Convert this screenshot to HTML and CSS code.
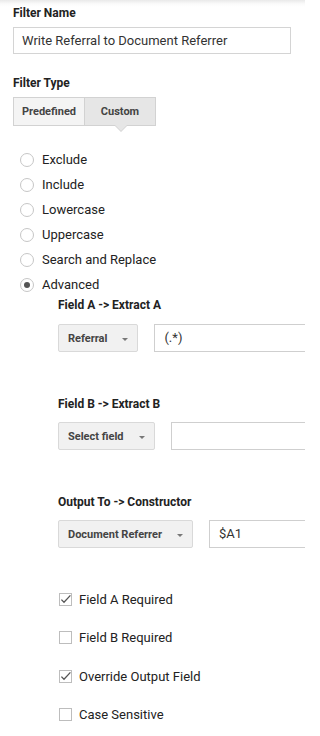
FILE: index.html
```html
<!DOCTYPE html>
<html lang="en">
<head>
<meta charset="utf-8">
<title>Filter</title>
<link rel="stylesheet" href="styles.css">
</head>
<body>
<div class="page">
  <div class="label">Filter Name</div>
  <div class="name-input">Write Referral to Document Referrer</div>

  <div class="label type-label">Filter Type</div>
  <div class="toggle">
    <div class="seg seg-first">Predefined</div>
    <div class="seg seg-active">Custom</div>
  </div>

  <div class="radios">
    <div class="radio-row"><span class="radio"></span><span>Exclude</span></div>
    <div class="radio-row"><span class="radio"></span><span>Include</span></div>
    <div class="radio-row"><span class="radio"></span><span>Lowercase</span></div>
    <div class="radio-row"><span class="radio"></span><span>Uppercase</span></div>
    <div class="radio-row"><span class="radio"></span><span>Search and Replace</span></div>
    <div class="radio-row"><span class="radio radio-on"></span><span>Advanced</span></div>
  </div>

  <div class="advanced">
    <div class="label">Field A -&gt; Extract A</div>
    <div class="adv-row">
      <div class="select"><span>Referral</span><span class="caret"></span></div>
      <div class="adv-input">(.*)</div>
    </div>

    <div class="label sub-label">Field B -&gt; Extract B</div>
    <div class="adv-row">
      <div class="select"><span>Select field</span><span class="caret"></span></div>
      <div class="adv-input"></div>
    </div>

    <div class="label sub-label">Output To -&gt; Constructor</div>
    <div class="adv-row">
      <div class="select"><span>Document Referrer</span><span class="caret"></span></div>
      <div class="adv-input">$A1</div>
    </div>

    <div class="checks">
      <div class="check-row">
        <svg class="checkbox" width="13" height="13" viewBox="0 0 13 13"><rect x="0.5" y="0.5" width="12" height="12" fill="#fff" stroke="#bdbdbd"/><path d="M2.4 6.6 L5 9.3 L11.4 2.4" fill="none" stroke="#555" stroke-width="1.3"/></svg>
        <span>Field A Required</span>
      </div>
      <div class="check-row">
        <svg class="checkbox" width="13" height="13" viewBox="0 0 13 13"><rect x="0.5" y="0.5" width="12" height="12" fill="#fff" stroke="#bdbdbd"/></svg>
        <span>Field B Required</span>
      </div>
      <div class="check-row">
        <svg class="checkbox" width="13" height="13" viewBox="0 0 13 13"><rect x="0.5" y="0.5" width="12" height="12" fill="#fff" stroke="#bdbdbd"/><path d="M2.4 6.6 L5 9.3 L11.4 2.4" fill="none" stroke="#555" stroke-width="1.3"/></svg>
        <span>Override Output Field</span>
      </div>
      <div class="check-row">
        <svg class="checkbox" width="13" height="13" viewBox="0 0 13 13"><rect x="0.5" y="0.5" width="12" height="12" fill="#fff" stroke="#bdbdbd"/></svg>
        <span>Case Sensitive</span>
      </div>
    </div>
  </div>
</div>
</body>
</html>
```

FILE: styles.css
```css
html, body {
  margin: 0;
  padding: 0;
  background: #fff;
}

.page {
  width: 305px;
  height: 736px;
  box-sizing: border-box;
  overflow: hidden;
  padding: 5px 0 0 13px;
  font-family: Roboto, "Liberation Sans", Arial, sans-serif;
  color: #222;
  background: linear-gradient(to bottom, #e9e9e9 0, #fbfbfb 4px, #fff 7px) no-repeat;
}

.label {
  font-weight: 700;
  font-size: 12px;
  line-height: 16px;
  color: #222;
}

.name-input {
  margin-top: 6px;
  width: 278px;
  height: 27px;
  box-sizing: border-box;
  border: 1px solid #d4d4d4;
  padding: 0 8px;
  font-size: 13px;
  line-height: 25px;
  color: #333;
  white-space: nowrap;
}

.type-label {
  margin-top: 21px;
}

.toggle {
  margin-top: 6px;
  display: flex;
  height: 29px;
}

.seg {
  box-sizing: border-box;
  height: 29px;
  border: 1px solid #d2d2d2;
  font-weight: 700;
  font-size: 11px;
  line-height: 27px;
  text-align: center;
  color: #444;
}

.seg-first {
  width: 72px;
  background: #f4f4f4;
}

.seg-active {
  width: 71px;
  border-left: 0;
  background: #e6e6e6;
  position: relative;
}

.seg-active::before {
  content: "";
  position: absolute;
  left: 29px;
  top: 27px;
  border-left: 7px solid transparent;
  border-right: 7px solid transparent;
  border-top: 7px solid #d2d2d2;
}

.seg-active::after {
  content: "";
  position: absolute;
  left: 30px;
  top: 27px;
  border-left: 6px solid transparent;
  border-right: 6px solid transparent;
  border-top: 6px solid #e6e6e6;
}

.radios {
  margin-top: 21px;
  padding-left: 7px;
}

.radio-row {
  height: 25px;
  display: flex;
  align-items: center;
  gap: 8px;
  font-size: 13px;
  color: #222;
}

.radio {
  width: 14px;
  height: 14px;
  box-sizing: border-box;
  border: 1px solid #c6c6c6;
  border-radius: 50%;
  background: #fff;
  display: flex;
  align-items: center;
  justify-content: center;
  flex: none;
}

.radio-on::after {
  content: "";
  width: 6px;
  height: 6px;
  border-radius: 50%;
  background: #555;
}

.advanced {
  padding-left: 45px;
}

.sub-label {
  margin-top: 44px;
}

.adv-row {
  margin-top: 10px;
  display: flex;
  gap: 16px;
  height: 28px;
}

.advanced > .label:first-child + .adv-row {
  margin-top: 11px;
}

.select {
  box-sizing: border-box;
  height: 28px;
  display: flex;
  align-items: center;
  gap: 15px;
  padding: 0 9px 0 9px;
  background: #f1f1f1;
  border: 1px solid #d9d9d9;
  border-radius: 2px;
  font-weight: 700;
  font-size: 11px;
  color: #444;
  white-space: nowrap;
  flex: none;
}

.caret {
  width: 0;
  height: 0;
  border-left: 3.5px solid transparent;
  border-right: 3.5px solid transparent;
  border-top: 3.5px solid #777;
  margin-top: 2px;
}

.adv-input {
  box-sizing: border-box;
  width: 220px;
  height: 28px;
  flex: none;
  border: 1px solid #cfcfcf;
  padding: 0 9px;
  font-size: 13px;
  line-height: 26px;
  color: #333;
}

.checks {
  margin-top: 32px;
  padding-left: 1px;
}

.check-row {
  height: 38.5px;
  display: flex;
  align-items: center;
  gap: 7px;
  font-size: 13px;
  color: #222;
}

.checkbox {
  display: block;
  flex: none;
}
```
